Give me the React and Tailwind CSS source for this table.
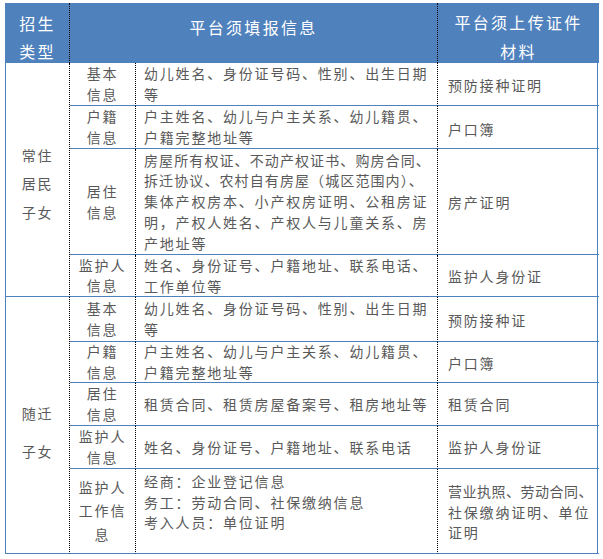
import React from "react";

const FONT = "font-['Noto_Sans_CJK_SC','Noto_Sans',sans-serif]";
const BODY = "text-[14px] leading-[20.7px] tracking-[1.8px] text-[#595959]";
const VDOT = "border-r [border-right-style:dotted] border-r-black";
const HB = "border-b border-b-[#4f81bd]";

function C2({ lines, lead = "leading-[20.7px]", extra = "" }) {
  return (
    <div className={`${VDOT} ${HB} flex flex-col items-center justify-center text-center ${extra}`}>
      {lines.map((l, i) => (
        <div key={i} className={`whitespace-nowrap ${lead}`}>{l}</div>
      ))}
    </div>
  );
}

function C3({ children, extra = "justify-center" }) {
  return (
    <div className={`${VDOT} ${HB} flex flex-col pl-[8px] ${extra}`}>{children}</div>
  );
}

function C4({ children, extra = "justify-center pt-[2px]" }) {
  return <div className={`${HB} flex flex-col pl-[10px] ${extra}`}>{children}</div>;
}

const L = ({ children, cls = "" }) => <div className={`whitespace-nowrap ${cls}`}>{children}</div>;

export default function App() {
  return (
    <div className={`w-[603px] h-[559px] bg-white pt-[3px] pl-[5px] ${FONT}`}>
      <div
        className={`grid grid-cols-[64px_66px_302px_161px] grid-rows-[60px_43px_43px_106px_42px_45px_41px_43px_43px_85px] w-[593px] border-l border-r border-[#4f81bd] ${BODY}`}
      >
        {/* Header */}
        <div className={`bg-[#4f81bd] ${VDOT} flex flex-col items-center pt-[6px] text-white text-[16px] leading-[28px] tracking-[2.2px]`}>
          <div>招生</div>
          <div>类型</div>
        </div>
        <div className={`col-span-2 bg-[#4f81bd] ${VDOT} flex flex-col items-center pt-[10px] text-white text-[16px] leading-[28px] tracking-[2.3px]`}>
          <div>平台须填报信息</div>
        </div>
        <div className="bg-[#4f81bd] flex flex-col items-center pt-[5px] text-white text-[16px] leading-[29px] tracking-[2.3px]">
          <div>平台须上传证件</div>
          <div>材料</div>
        </div>

        {/* Group 1 */}
        <div className={`row-span-4 ${VDOT} ${HB} flex flex-col items-center justify-center pt-[8px] leading-[28.5px]`}>
          <div>常住</div>
          <div>居民</div>
          <div>子女</div>
        </div>

        <C2 lines={["基本", "信息"]} />
        <C3>
          <L>幼儿姓名、身份证号码、性别、出生日期</L>
          <L>等</L>
        </C3>
        <C4><L>预防接种证明</L></C4>

        <C2 lines={["户籍", "信息"]} />
        <C3>
          <L>户主姓名、幼儿与户主关系、幼儿籍贯、</L>
          <L>户籍完整地址等</L>
        </C3>
        <C4 extra="justify-center pt-[4px]"><L>户口簿</L></C4>

        <C2 lines={["居住", "信息"]} />
        <C3>
          <L cls="tracking-[1.1px]">房屋所有权证、不动产权证书、购房合同、</L>
          <L cls="tracking-[1.1px]">拆迁协议、农村自有房屋（城区范围内）、</L>
          <L>集体产权房本、小产权房证明、公租房证</L>
          <L>明，产权人姓名、产权人与儿童关系、房</L>
          <L>产地址等</L>
        </C3>
        <C4><L>房产证明</L></C4>

        <C2 lines={["监护人", "信息"]} lead="leading-[19.5px]" />
        <C3>
          <L>姓名、身份证号、户籍地址、联系电话、</L>
          <L>工作单位等</L>
        </C3>
        <C4><L>监护人身份证</L></C4>

        {/* Group 2 */}
        <div className={`row-span-5 ${VDOT} ${HB} flex flex-col items-center justify-center gap-[9px] pt-[15px] leading-[29px]`}>
          <div>随迁</div>
          <div>子女</div>
        </div>

        <C2 lines={["基本", "信息"]} />
        <C3>
          <L>幼儿姓名、身份证号码、性别、出生日期</L>
          <L>等</L>
        </C3>
        <C4><L>预防接种证</L></C4>

        <C2 lines={["户籍", "信息"]} />
        <C3>
          <L>户主姓名、幼儿与户主关系、幼儿籍贯、</L>
          <L>户籍完整地址等</L>
        </C3>
        <C4><L>户口簿</L></C4>

        <C2 lines={["居住", "信息"]} />
        <C3><L>租赁合同、租赁房屋备案号、租房地址等</L></C3>
        <C4 extra="justify-center"><L>租赁合同</L></C4>

        <C2 lines={["监护人", "信息"]} />
        <C3><L>姓名、身份证号、户籍地址、联系电话</L></C3>
        <C4 extra="justify-center"><L>监护人身份证</L></C4>

        <C2 lines={["监护人", "工作信", "息"]} lead="leading-[23.5px]" />
        <C3 extra="justify-start pt-[2px]">
          <L>经商：企业登记信息</L>
          <L>务工：劳动合同、社保缴纳信息</L>
          <L>考入人员：单位证明</L>
        </C3>
        <C4 extra="justify-center pt-[2px]">
          <L cls="tracking-[0.5px]">营业执照、劳动合同、</L>
          <L>社保缴纳证明、单位</L>
          <L>证明</L>
        </C4>
      </div>
    </div>
  );
}
